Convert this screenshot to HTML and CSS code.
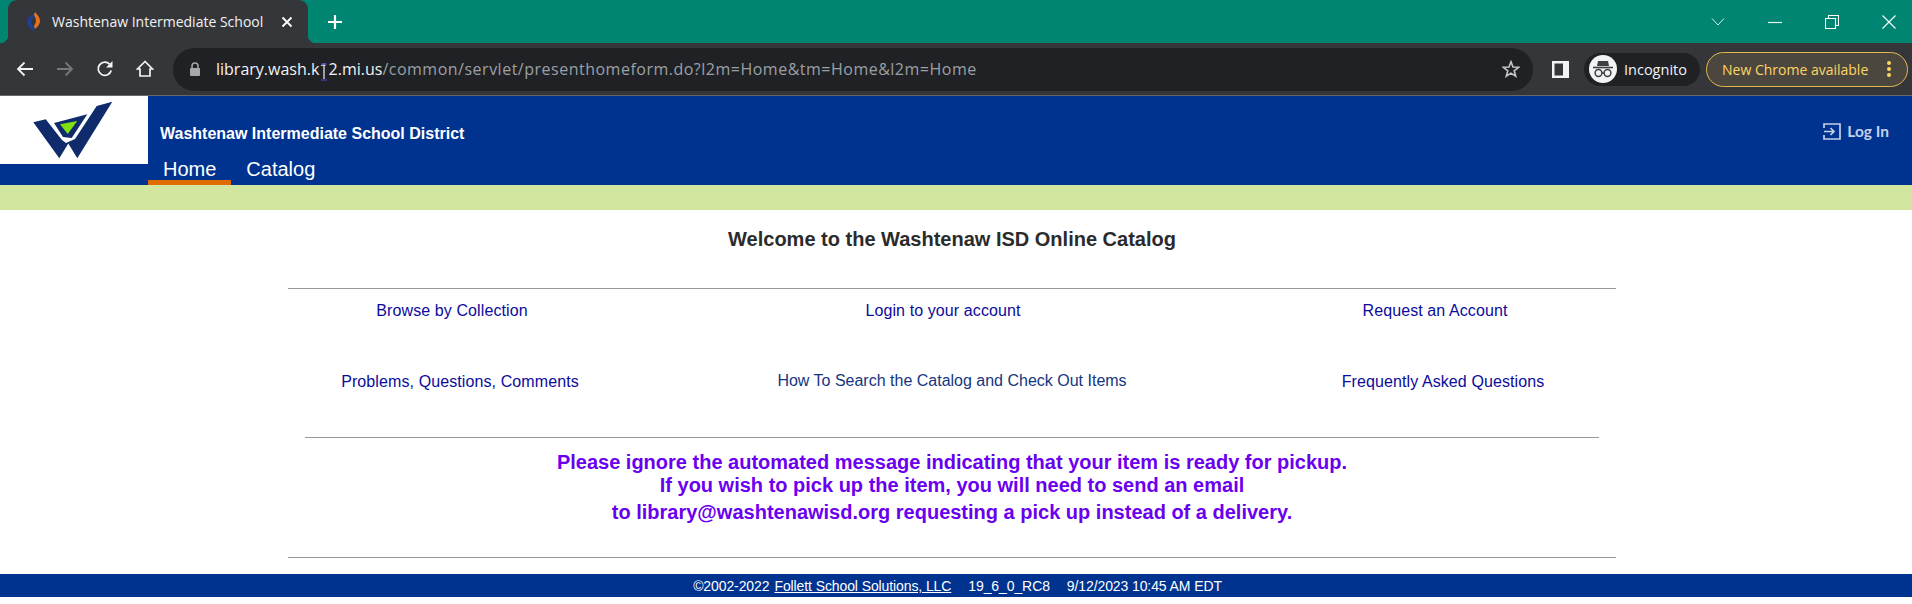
FILE: index.html
```html
<!DOCTYPE html>
<html lang="en">
<head>
    <meta charset="UTF-8">
    <title>Washtenaw Intermediate School District</title>
    <link rel="stylesheet" href="styles.css">
</head>
<body>
    <div class="tabstrip">
        <div class="tab">
            <svg class="favicon" width="14" height="20" viewBox="0 0 14 20">
                <path d="M7 1 Q0 6 0 10 Q1 15 6 19 L8 15 Q4 12 4 10 Q5 6 8 4 Z" fill="#1d3f94"/>
                <path d="M8 0 Q13 5 13 9 Q13 13 8 17 L7 14 Q9 11 9 9 Q9 6 7 3 Z" fill="#e8721c"/>
            </svg>
            <span class="tab-title">Washtenaw Intermediate School</span>
            <svg class="tab-close" width="12" height="12" viewBox="0 0 12 12">
                <path d="M1.5 1.5 L10.5 10.5 M10.5 1.5 L1.5 10.5" stroke="#fff" stroke-width="1.8"/>
            </svg>
        </div>
        <svg class="new-tab" width="16" height="16" viewBox="0 0 16 16">
            <path d="M8 1 V15 M1 8 H15" stroke="#fff" stroke-width="2.2"/>
        </svg>
        <div class="window-buttons">
            <svg width="14" height="10" viewBox="0 0 14 10"><path d="M1 1.5 L7 8 L13 1.5" fill="none" stroke="#d6ece8" stroke-width="1"/></svg>
            <svg width="14" height="10" viewBox="0 0 14 10"><path d="M0 5.5 H14" stroke="#e8f4f2" stroke-width="1.2"/></svg>
            <svg width="14" height="14" viewBox="0 0 14 14"><path d="M.5 3.5 H10.5 V13.5 H.5 Z M3.5 3 V.5 H13.5 V10.5 H11" fill="none" stroke="#fff" stroke-width="1.1"/></svg>
            <svg width="14" height="14" viewBox="0 0 14 14"><path d="M.5 .5 L13.5 13.5 M13.5 .5 L.5 13.5" stroke="#fff" stroke-width="1.1"/></svg>
        </div>
    </div>

    <div class="toolbar">
        <div class="nav-btn">
            <svg width="18" height="16" viewBox="0 0 18 16"><path d="M17 8 H2 M8.5 1.5 L2 8 L8.5 14.5" fill="none" stroke="#f1f3f4" stroke-width="1.8"/></svg>
        </div>
        <div class="nav-btn">
            <svg width="18" height="16" viewBox="0 0 18 16"><path d="M1 8 H16 M9.5 1.5 L16 8 L9.5 14.5" fill="none" stroke="#75777a" stroke-width="1.8"/></svg>
        </div>
        <div class="nav-btn">
            <svg width="18" height="18" viewBox="0 0 18 18"><path d="M15.2 10.5 A6.6 6.6 0 1 1 13.6 4.2" fill="none" stroke="#f1f3f4" stroke-width="1.8"/><path d="M16.5 1 V7.5 H10 Z" fill="#f1f3f4"/></svg>
        </div>
        <div class="nav-btn">
            <svg width="18" height="18" viewBox="0 0 18 18"><path d="M9 1.5 L1.5 9 H4 V16 H14 V9 H16.5 Z" fill="none" stroke="#f1f3f4" stroke-width="1.7"/></svg>
        </div>
        <div class="omnibox">
            <svg class="lock" width="12" height="14" viewBox="0 0 12 14"><path d="M3 6 V4 A3 3 0 0 1 9 4 V6" fill="none" stroke="#a6a8ab" stroke-width="1.5"/><rect x="1" y="6" width="10" height="8" rx="1" fill="#a6a8ab"/></svg>
            <span class="url"><span class="host">library.wash.k12.mi.us</span><span class="path">/common/servlet/presenthomeform.do?l2m=Home&amp;tm=Home&amp;l2m=Home</span></span>
            <svg class="ibeam" width="8" height="18" viewBox="0 0 8 18"><path d="M0 3 H8 V15 H0 Z" fill="#202124"/><path d="M4 2 V16" stroke="#f1f3f4" stroke-width="1.2"/><path d="M1 1 H7 M1 17 H7" stroke="#3c3ca8" stroke-width="1.4"/></svg>
            <svg class="star" width="18" height="18" viewBox="0 0 18 18"><path d="M9 1.8 L11 7 L16.6 7.3 L12.2 10.8 L13.7 16.2 L9 13.2 L4.3 16.2 L5.8 10.8 L1.4 7.3 L7 7 Z" fill="none" stroke="#c4c6c8" stroke-width="1.6"/></svg>
        </div>
        <svg class="side-panel" width="17" height="17" viewBox="0 0 17 17"><path fill-rule="evenodd" d="M0 0 H17 V17 H0 Z M2.5 2.5 V14.5 H11 V2.5 Z" fill="#f1f3f4"/></svg>
        <div class="incognito">
            <span class="avatar">
                <svg width="20" height="18" viewBox="0 0 20 18">
                    <path d="M5 1 H15 L16 6 H4 Z" fill="#3c4043"/>
                    <path d="M0 7.5 H20" stroke="#3c4043" stroke-width="1.6"/>
                    <circle cx="5.5" cy="13" r="3.4" fill="none" stroke="#3c4043" stroke-width="1.5"/>
                    <circle cx="14.5" cy="13" r="3.4" fill="none" stroke="#3c4043" stroke-width="1.5"/>
                    <path d="M9 13 H11" stroke="#3c4043" stroke-width="1.5"/>
                </svg>
            </span>
            <span>Incognito</span>
        </div>
        <div class="update-pill">
            <span>New Chrome available</span>
            <svg width="4" height="16" viewBox="0 0 4 16"><circle cx="2" cy="2" r="2" fill="#fdd663"/><circle cx="2" cy="8" r="2" fill="#fdd663"/><circle cx="2" cy="14" r="2" fill="#fdd663"/></svg>
        </div>
    </div>

    <div class="site-header">
        <div class="logo">
            <svg width="148" height="68" viewBox="0 0 148 68">
                <polygon points="33.3,26.3 45.7,23.3 62,44 66,47 75,43 96.7,10 112.3,5.7 77.3,62.3 68.3,47.5 59.3,62.3" fill="#0f2b6c"/>
                <polygon points="54,27 87.3,18.3 71.7,42 63,41" fill="#0f2b6c"/>
                <polygon points="60,28.3 77.3,25 67.7,38" fill="#80e010"/>
            </svg>
        </div>
        <div class="header-main">
            <div class="district">Washtenaw Intermediate School District</div>
            <div class="site-nav">
                <a class="nav-item active">Home</a>
                <a class="nav-item">Catalog</a>
            </div>
        </div>
        <a class="login">
            <svg width="18" height="17" viewBox="0 0 18 17"><path d="M1 5 V1 H17 V16 H1 V12 M1 8.5 H11 M7.5 5 L11 8.5 L7.5 12" fill="none" stroke="#c3d0ea" stroke-width="1.7"/></svg>
            <span>Log In</span>
        </a>
    </div>
    <div class="green-bar"></div>

    <div class="content">
        <h1 class="welcome">Welcome to the Washtenaw ISD Online Catalog</h1>
        <hr class="rule">
        <div class="link-row first">
            <a>Browse by Collection</a>
            <a>Login to your account</a>
            <a>Request an Account</a>
        </div>
        <div class="link-row second">
            <a>Problems, Questions, Comments</a>
            <a class="dark">How To Search the Catalog and Check Out Items</a>
            <a>Frequently Asked Questions</a>
        </div>
        <hr class="rule short">
        <div class="notice">
            <p>Please ignore the automated message indicating that your item is ready for pickup.</p>
            <p>If you wish to pick up the item, you will need to send an email</p>
            <p class="last">to library@washtenawisd.org requesting a pick up instead of a delivery.</p>
        </div>
        <hr class="rule">
    </div>

    <div class="site-footer">
        <span>©2002-2022</span>
        <a>Follett School Solutions, LLC</a>
        <span class="version">19_6_0_RC8</span>
        <span class="version">9/12/2023 10:45 AM EDT</span>
    </div>
</body>
</html>
```

FILE: styles.css
```css
body {
    margin: 0;
    height: 604px;
    overflow: hidden;
    background-color: #fff;
    font-family: "Liberation Sans", Arial, sans-serif;
}

/* browser chrome */
.tabstrip {
    display: flex;
    align-items: center;
    height: 43px;
    background-color: #008573;
}
.tab {
    position: relative;
    display: flex;
    align-items: center;
    align-self: stretch;
    box-sizing: border-box;
    width: 300px;
    margin-left: 8px;
    padding-left: 19px;
    background-color: #35363a;
    border-radius: 9px 9px 0 0;
}
.tab::before,
.tab::after {
    content: "";
    position: absolute;
    bottom: 0;
    width: 8px;
    height: 8px;
}
.tab::before {
    left: -8px;
    background: radial-gradient(circle at 0 0, transparent 8px, #35363a 8.5px);
}
.tab::after {
    right: -8px;
    background: radial-gradient(circle at 100% 0, transparent 8px, #35363a 8.5px);
}
.favicon {
    flex: none;
}
.tab-title {
    flex: none;
    width: 214px;
    margin-left: 11px;
    white-space: nowrap;
    font-family: "Open Sans", sans-serif;
    font-size: 14px;
    color: #f1f3f4;
}
.tab-close {
    margin-left: 15px;
}
.new-tab {
    margin-left: 19px;
}
.window-buttons {
    display: flex;
    align-items: center;
    gap: 43px;
    margin-left: auto;
    margin-right: 16px;
}

.toolbar {
    display: flex;
    align-items: center;
    box-sizing: border-box;
    height: 53px;
    padding-left: 5px;
    background-color: #35363a;
    border-bottom: 1px solid #67686b;
}
.nav-btn {
    display: flex;
    justify-content: center;
    align-items: center;
    width: 40px;
}
.omnibox {
    position: relative;
    display: flex;
    align-items: center;
    width: 1360px;
    height: 43px;
    margin-left: 8px;
    background-color: #202124;
    border-radius: 22px;
}
.lock {
    margin-left: 16px;
}
.url {
    margin-left: 15px;
    font-family: "Open Sans", sans-serif;
    font-size: 16px;
    color: #9aa0a6;
    white-space: nowrap;
}
.host {
    color: #f1f3f4;
}
.path {
    letter-spacing: .5px;
}
.ibeam {
    position: absolute;
    left: 147px;
    top: 15px;
}
.star {
    margin-left: auto;
    margin-right: 13px;
}
.side-panel {
    margin-left: 19px;
}
.incognito {
    display: flex;
    align-items: center;
    gap: 7px;
    width: 116px;
    height: 33px;
    margin-left: 15px;
    background-color: #202124;
    border-radius: 17px;
    font-family: "Open Sans", sans-serif;
    font-size: 14.5px;
    color: #f1f3f4;
}
.avatar {
    display: flex;
    justify-content: center;
    align-items: center;
    width: 28px;
    height: 28px;
    margin-left: 5px;
    background-color: #f1f3f4;
    border-radius: 50%;
}
.update-pill {
    display: flex;
    align-items: center;
    justify-content: space-between;
    box-sizing: border-box;
    width: 202px;
    height: 35px;
    margin-left: 6px;
    padding: 0 16px 0 15px;
    background-color: #4b473f;
    border: 1.5px solid #e4b84f;
    border-radius: 18px;
    font-family: "Open Sans", sans-serif;
    font-size: 14px;
    color: #fdd663;
}

/* site header */
.site-header {
    display: flex;
    height: 89px;
    background-color: #003390;
}
.logo {
    flex: none;
    width: 148px;
    height: 68px;
    background-color: #fff;
}
.header-main {
    display: flex;
    flex-direction: column;
    justify-content: flex-end;
}
.district {
    margin-left: 12px;
    margin-bottom: 11px;
    font-size: 16px;
    font-weight: bold;
    color: #fff;
}
.site-nav {
    display: flex;
}
.nav-item {
    box-sizing: border-box;
    height: 31px;
    padding: 4px 15px 0;
    font-size: 20px;
    color: #fff;
}
.nav-item.active {
    border-bottom: 5px solid #e06c00;
}
.login {
    display: flex;
    align-items: center;
    gap: 6px;
    align-self: flex-start;
    margin-left: auto;
    margin-top: 26px;
    margin-right: 23px;
    font-family: "Lato", sans-serif;
    font-size: 15.5px;
    font-weight: bold;
    color: #c3d0ea;
}
.green-bar {
    height: 25px;
    background-color: #d3e6a0;
}

/* page body */
.content {
    box-sizing: border-box;
    height: 364px;
    padding-top: 17px;
}
.welcome {
    margin: 0 0 37px;
    font-size: 20px;
    line-height: 24px;
    text-align: center;
    text-indent: -8px;
    color: #2b2b2b;
}
.rule {
    height: 1px;
    margin: 0 296px 0 288px;
    background-color: #999;
    border: none;
}
.rule.short {
    margin: 45px 313px 0 305px;
}
.link-row {
    display: grid;
    font-size: 16px;
    line-height: 20px;
    letter-spacing: .1px;
    text-align: center;
    color: #0b0b9c;
}
.link-row.first {
    grid-template-columns: 328px 654px 330px;
    margin: 12px 0 0 288px;
}
.link-row.second {
    grid-template-columns: 310px 674px 308px;
    margin: 51px 0 0 305px;
}
.link-row .dark {
    margin-top: -1px;
    letter-spacing: 0;
    color: #14367f;
}
.notice {
    margin: 13px 313px 0 305px;
    font-size: 20px;
    font-weight: bold;
    text-align: center;
    color: #6a00f0;
}
.notice p {
    margin: 0;
    line-height: 23px;
}
.notice p.last {
    margin-top: 4px;
    margin-bottom: 33px;
}

.site-footer {
    display: flex;
    justify-content: center;
    align-items: center;
    box-sizing: border-box;
    height: 23px;
    padding: 1px 0 0 3px;
    background-color: #003390;
    font-size: 14px;
    letter-spacing: -.1px;
    color: #fff;
}
.site-footer a {
    margin-left: 5px;
    text-decoration: underline;
}
.site-footer .version {
    margin-left: 17px;
}
```
